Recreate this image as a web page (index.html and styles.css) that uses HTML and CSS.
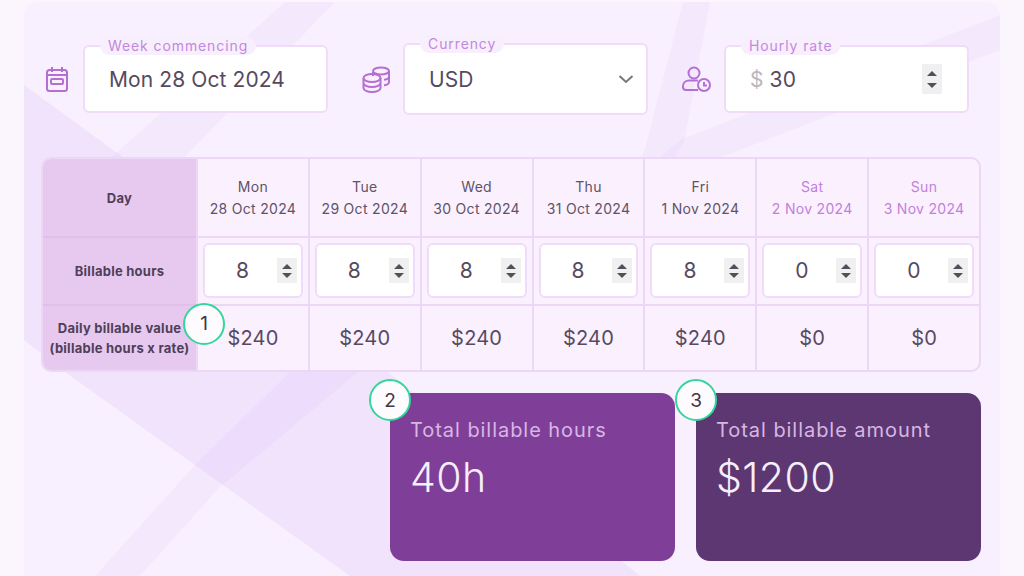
FILE: index.html
```html
<!DOCTYPE html>
<html lang="en">
<head>
    <meta charset="UTF-8">
    <title>Billable hours</title>
    <link rel="stylesheet" href="styles.css">
</head>
<body>
    <div class="panel">
        <svg class="swoosh" viewBox="0 0 976 574" preserveAspectRatio="none">
            <path d="M0 83 L96 153 L616 574 L326 574 L41 370 L0 338 Z"/>
            <path class="tenue" d="M261 0 L311 0 L146 170 L71 170 Z"/>
            <path class="tenue" d="M71 574 L116 574 L196 485 L334 370 L266 370 L171 463 Z"/>
            <path class="tenue" d="M659 0 L686 0 L660 140 L516 370 L486 370 L620 150 Z"/>
            <path class="tenue" d="M656 138 L976 13 L976 48 L716 148 L660 170 L620 170 Z"/>
        </svg>

        <div class="filtros">
            <svg class="icono" width="24" height="28" viewBox="0 0 24 28">
                <rect x="2" y="5" width="20" height="21" rx="2.5"/>
                <path d="M7 2v5M17 2v5M2 10h20"/>
                <rect x="6" y="14" width="12" height="5" rx="1"/>
            </svg>
            <div class="campo">
                <span class="leyenda">Week commencing</span>
                <span class="valor">Mon 28 Oct 2024</span>
            </div>

            <svg class="icono icono-corto" width="28" height="28" viewBox="0 0 28 28">
                <ellipse cx="19" cy="6" rx="8" ry="3.5"/>
                <path d="M11 7v4M27 6v11c0 1.8-2.5 3-5 3.300M27 11.500c0 1.800-2.500 3-5 3.300"/>
                <ellipse cx="10" cy="13" rx="8.500" ry="4"/>
                <path d="M1.500 13v10c0 2.200 3.800 4 8.500 4s8.500-1.800 8.500-4V13M1.500 18c0 2.200 3.800 4 8.500 4s8.500-1.800 8.500-4"/>
            </svg>
            <div class="campo campo-alto">
                <span class="leyenda">Currency</span>
                <span class="valor">USD</span>
                <svg class="flecha" width="16" height="10" viewBox="0 0 16 10"><path d="M1.500 2l6.500 6 6.500-6"/></svg>
            </div>

            <svg class="icono icono-corto" width="29" height="26" viewBox="0 0 29 26">
                <circle cx="12" cy="7" r="5.500"/>
                <path d="M16 24H4a3 3 0 0 1-3-3v-1c0-3.500 3-5.500 6-5.500h9"/>
                <circle cx="22" cy="19" r="6"/>
                <path d="M22 16v3.500h3"/>
            </svg>
            <div class="campo campo-tarifa">
                <span class="leyenda">Hourly rate</span>
                <span class="valor"><span class="moneda">$</span> 30</span>
                <span class="giro giro-alto"><i class="arriba"></i><i class="abajo"></i></span>
            </div>
        </div>

        <div class="tabla">
            <div class="celda titulo">Day</div>
            <div class="celda dia">Mon<br>28 Oct 2024</div>
            <div class="celda dia">Tue<br>29 Oct 2024</div>
            <div class="celda dia">Wed<br>30 Oct 2024</div>
            <div class="celda dia">Thu<br>31 Oct 2024</div>
            <div class="celda dia">Fri<br>1 Nov 2024</div>
            <div class="celda dia finde">Sat<br>2 Nov 2024</div>
            <div class="celda dia finde">Sun<br>3 Nov 2024</div>

            <div class="celda titulo">Billable hours</div>
            <div class="celda horas"><div class="caja"><span>8</span><span class="giro"><i class="arriba"></i><i class="abajo"></i></span></div></div>
            <div class="celda horas"><div class="caja"><span>8</span><span class="giro"><i class="arriba"></i><i class="abajo"></i></span></div></div>
            <div class="celda horas"><div class="caja"><span>8</span><span class="giro"><i class="arriba"></i><i class="abajo"></i></span></div></div>
            <div class="celda horas"><div class="caja"><span>8</span><span class="giro"><i class="arriba"></i><i class="abajo"></i></span></div></div>
            <div class="celda horas"><div class="caja"><span>8</span><span class="giro"><i class="arriba"></i><i class="abajo"></i></span></div></div>
            <div class="celda horas"><div class="caja"><span>0</span><span class="giro"><i class="arriba"></i><i class="abajo"></i></span></div></div>
            <div class="celda horas"><div class="caja"><span>0</span><span class="giro"><i class="arriba"></i><i class="abajo"></i></span></div></div>

            <div class="celda titulo titulo-ultimo">Daily billable value<br>(billable hours x rate)<span class="marca marca-uno">1</span></div>
            <div class="celda importe">$240</div>
            <div class="celda importe">$240</div>
            <div class="celda importe">$240</div>
            <div class="celda importe">$240</div>
            <div class="celda importe">$240</div>
            <div class="celda importe">$0</div>
            <div class="celda importe">$0</div>
        </div>

        <div class="totales">
            <div class="total total-horas">
                <span class="marca marca-total">2</span>
                <div class="total-nombre">Total billable hours</div>
                <div class="total-valor">40h</div>
            </div>
            <div class="total total-importe">
                <span class="marca marca-total">3</span>
                <div class="total-nombre">Total billable amount</div>
                <div class="total-valor">$1200</div>
            </div>
        </div>
    </div>
</body>
</html>
```

FILE: styles.css
```css
* {
    box-sizing: border-box;
}

body {
    margin: 0;
    height: 576px;
    overflow: hidden;
    background-color: #fbf5fe;
    font-family: Inter, "Open Sans", sans-serif;
    color: #574a5f;
    padding: 2px 24px 0;
}

.panel {
    position: relative;
    height: 574px;
    background-color: #f8f0fe;
    border-radius: 14px 14px 0 0;
    overflow: hidden;
    padding: 41px 19px 0 17px;
}

.swoosh {
    position: absolute;
    top: 0;
    left: 0;
    width: 100%;
    height: 100%;
    fill: #b565e6;
    fill-opacity: 0.09;
}

.swoosh .tenue {
    fill-opacity: 0.055;
}

.filtros {
    position: relative;
    display: flex;
    align-items: center;
    height: 72px;
    padding-left: 4px;
}

.icono {
    flex: none;
    margin-right: 14px;
    fill: none;
    stroke: #b56fd3;
    stroke-width: 2;
}

.icono-corto {
    margin-right: 13px;
}

.campo {
    position: relative;
    display: flex;
    align-items: center;
    justify-content: space-between;
    width: 245px;
    height: 68px;
    margin-right: 34px;
    padding: 0 12px 0 24px;
    background: white;
    border: 2px solid #f0dcf8;
    border-radius: 6px;
}

.campo-alto {
    height: 72px;
}

.campo-tarifa {
    margin-right: 0;
    padding-right: 25px;
}

.leyenda {
    position: absolute;
    top: -10px;
    left: 15px;
    padding: 0 8px;
    background: #f8effd;
    border-radius: 9px;
    color: #c487e0;
    font-size: 14px;
    letter-spacing: 0.9px;
    line-height: 18px;
}

.valor {
    font-size: 21px;
    letter-spacing: 0.1px;
}

.moneda {
    color: #bbb6bd;
}

.flecha {
    fill: none;
    stroke: #7b7480;
    stroke-width: 2;
}

.giro {
    display: flex;
    flex-direction: column;
    align-items: center;
    justify-content: center;
    gap: 4px;
    width: 20px;
    height: 25px;
    background: #f0f0f0;
}

.giro-alto {
    height: 30px;
    gap: 7px;
}

.giro i {
    display: block;
    border-left: 5px solid transparent;
    border-right: 5px solid transparent;
}

.arriba {
    border-bottom: 5px solid #564c5c;
}

.abajo {
    border-top: 5px solid #564c5c;
}

.tabla {
    position: relative;
    display: grid;
    grid-template-columns: 153px repeat(7, 1fr);
    grid-template-rows: 77px 68px 66px;
    margin-top: 42px;
    background-color: #fbf0fe;
    border: 2px solid #ecd7f6;
    border-radius: 10px;
}

.celda {
    display: flex;
    align-items: center;
    justify-content: center;
    text-align: center;
    border-left: 2px solid #ecd7f6;
    border-top: 2px solid #ecd7f6;
}

.celda:nth-child(-n+8) {
    border-top: none;
}

.titulo {
    position: relative;
    border-left: none;
    background-color: #e7c9f0;
    border-top-color: #e0bfeb;
    font-size: 13px;
    font-weight: 700;
    letter-spacing: 0.25px;
    line-height: 20px;
    color: #4e4058;
}

.titulo:first-child {
    border-radius: 8px 0 0 0;
}

.titulo-ultimo {
    border-radius: 0 0 0 8px;
}

.dia {
    font-size: 14px;
    letter-spacing: 0.3px;
    line-height: 22px;
    color: #5f5366;
}

.finde {
    color: #c27fdd;
}

.horas {
    padding: 5px 5px 6px;
}

.caja {
    display: flex;
    align-items: center;
    justify-content: space-between;
    width: 100%;
    height: 100%;
    padding: 0 4px 0 31px;
    background: white;
    border: 2px solid #f0dcf8;
    border-radius: 6px;
    font-size: 21px;
}

.importe {
    font-size: 20px;
    letter-spacing: 0.2px;
}

.marca {
    position: absolute;
    display: flex;
    align-items: center;
    justify-content: center;
    width: 42px;
    height: 42px;
    background: #fdfbfe;
    border: 2px solid #35d69a;
    border-radius: 50%;
    color: #3f3646;
    font-size: 19px;
    font-weight: 400;
    letter-spacing: 0;
}

.marca-uno {
    top: -3px;
    right: -29px;
    z-index: 1;
}

.marca-total {
    top: -14px;
    left: -21px;
}

.totales {
    position: relative;
    display: flex;
    justify-content: flex-end;
    gap: 21px;
    margin-top: 21px;
}

.total {
    position: relative;
    width: 285px;
    height: 168px;
    padding: 23px 20px;
    border-radius: 14px;
}

.total-horas {
    background-color: #7f3f98;
}

.total-importe {
    background-color: #5c3772;
}

.total-nombre {
    color: #d8b6e4;
    font-size: 20px;
    letter-spacing: 0.95px;
    line-height: 28px;
}

.total-valor {
    margin-top: 8px;
    color: #f6eefa;
    font-size: 41px;
    font-weight: 300;
    letter-spacing: 0.4px;
    line-height: 50px;
}
```
